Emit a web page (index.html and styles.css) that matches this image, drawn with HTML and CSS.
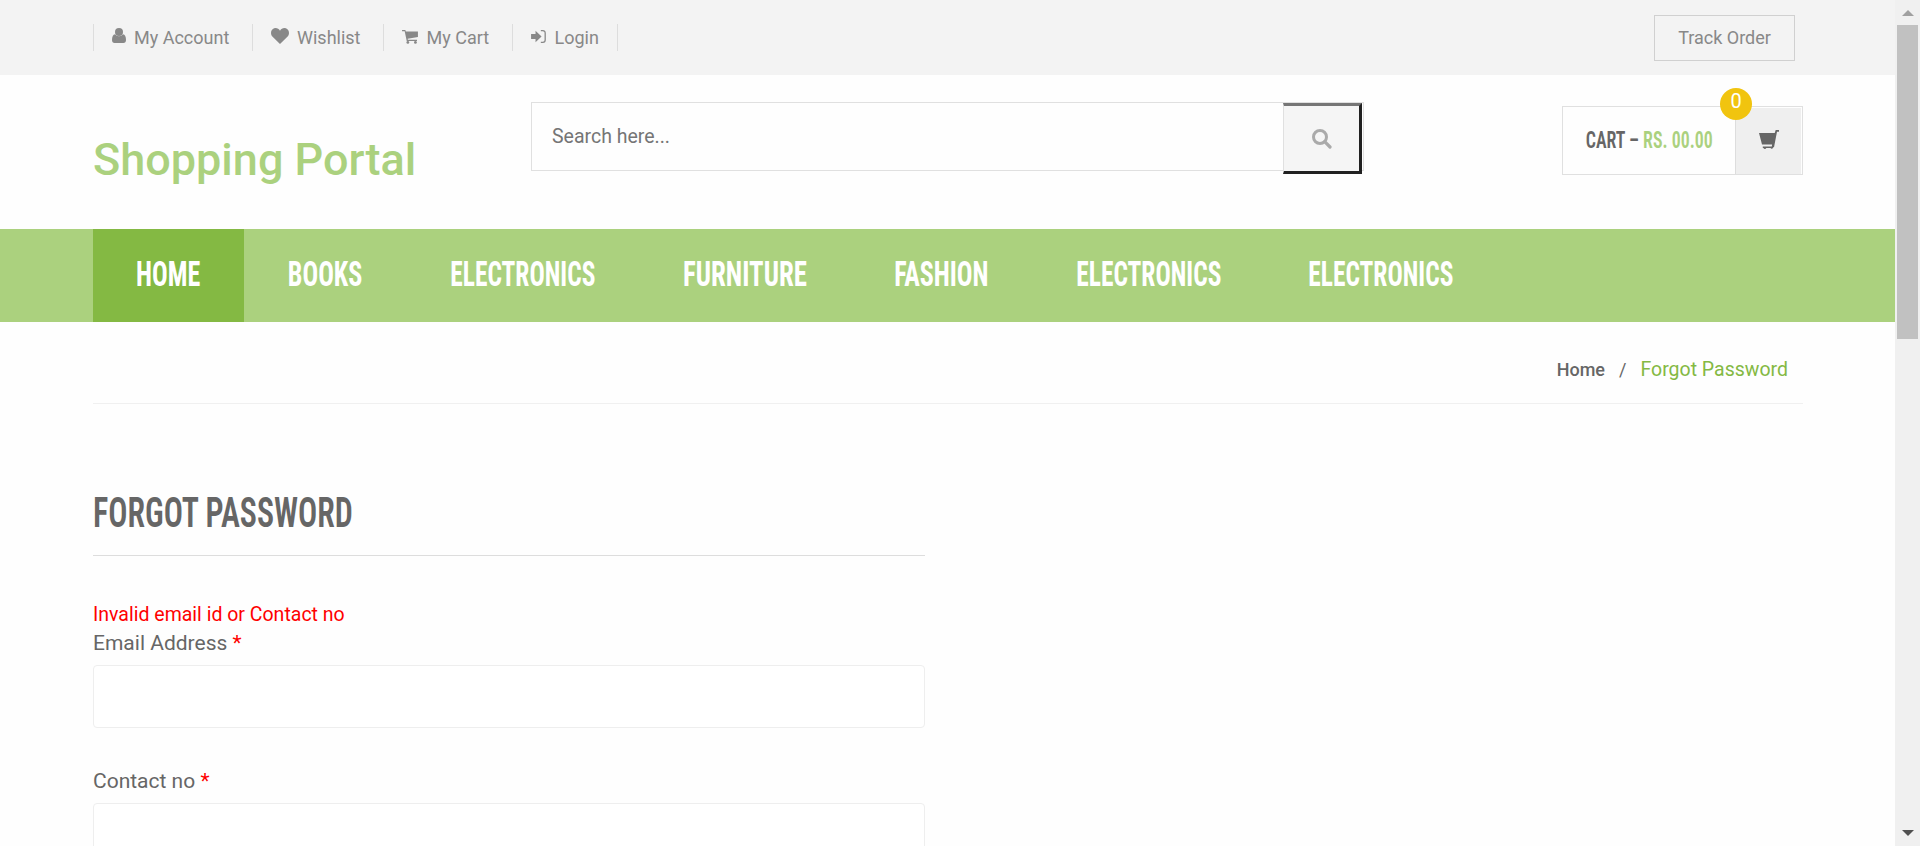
FILE: index.html
```html
<!DOCTYPE html>
<html lang="en">
<head>
<meta charset="utf-8">
<title>Shopping Portal | Forgot Password</title>
<link rel="stylesheet" href="styles.css">
</head>
<body>
<div class="page">
  <div class="topbar">
    <ul class="account">
      <li class="acc-user"><svg width="14" height="15" viewBox="0 0 14 15"><circle cx="7" cy="4" r="4"/><path d="M3 6.300C1 6.500 0 9 0 12c0 2 1 3 2.500 3h9c1.500 0 2.500-1 2.500-3 0-3-1-5.500-3-5.700a5 5 0 0 1-8 0z"/></svg>My Account</li>
      <li class="acc-wish"><svg width="18" height="16" viewBox="0 0 18 16"><path d="M9 16 1.600 8.800C-.7 6.400-.3 2.800 1.600 1.200 4-.8 7.500 0 9 2.800 10.500 0 14-.8 16.400 1.200 18.300 2.800 18.700 6.400 16.400 8.800z"/></svg>Wishlist</li>
      <li class="acc-cart"><svg width="16" height="14" viewBox="0 0 17 15"><path d="M0 0h3.500l.5 1.500h13v6L6 9.300l.2 1.200H16v1.300H5L2.800 1.300H0z"/><circle cx="6.200" cy="13.300" r="1.500"/><circle cx="14.300" cy="13.300" r="1.500"/></svg>My Cart</li>
      <li class="acc-login"><svg width="15" height="13" viewBox="0 0 16 14"><path d="M0 4.300h4.800V.8L11.300 7l-6.500 6.200V9.700H0z"/><path d="M10.500 .7h2.200A2.500 2.500 0 0 1 15.200 3.200v7.600a2.500 2.500 0 0 1-2.500 2.500h-2.200" fill="none" stroke="#888" stroke-width="1.400"/></svg>Login</li>
    </ul>
    <a class="track">Track Order</a>
  </div>
  <header class="header">
    <div class="logo">Shopping Portal</div>
    <form class="search">
      <input class="search-field" placeholder="Search here...">
      <button class="search-button" type="button" aria-label="Search"><svg width="20" height="20" viewBox="0 0 20 20"><circle cx="8" cy="8" r="6.500" fill="none" stroke="#aaa" stroke-width="3"/><path d="M12.700 12.700 18 18" stroke="#aaa" stroke-width="3.200" stroke-linecap="round"/></svg></button>
    </form>
    <div class="cart">
      <div class="cart-total"><span class="condensed">CART – <b>RS. 00.00</b></span></div>
      <div class="cart-icon"><svg width="20" height="20" viewBox="0 0 20 20"><path d="M0 3h15.700L16.700 0H20v1.700h-2L15 17.300h-.8a1.500 1.500 0 0 1-2.700.8H7.300a1.500 1.500 0 0 1-2.800 0H3.800v-1.500h9l.3-2H3z"/></svg></div>
      <span class="badge">0</span>
    </div>
  </header>
  <nav class="nav">
    <a class="nav-item active w-home"><span>HOME</span></a>
    <a class="nav-item w-books"><span>BOOKS</span></a>
    <a class="nav-item w-elec"><span>ELECTRONICS</span></a>
    <a class="nav-item w-furn"><span>FURNITURE</span></a>
    <a class="nav-item w-fash"><span>FASHION</span></a>
    <a class="nav-item w-elec"><span>ELECTRONICS</span></a>
    <a class="nav-item w-elec"><span>ELECTRONICS</span></a>
  </nav>
  <div class="breadcrumb"><span class="crumb-home">Home</span><span class="crumb-sep">/</span><span class="crumb-here">Forgot Password</span></div>
  <main class="content">
    <h1 class="title"><span>FORGOT PASSWORD</span></h1>
    <p class="error">Invalid email id or Contact no</p>
    <label class="label" for="email">Email Address <i>*</i></label>
    <input class="field" id="email">
    <label class="label" for="contact">Contact no <i>*</i></label>
    <input class="field" id="contact">
  </main>
</div>
<div class="scrollbar">
  <svg width="12" height="6" viewBox="0 0 12 6"><path d="M0 6 6 0l6 6z" fill="#a0a0a0"/></svg>
  <div class="thumb"></div>
  <svg class="down" width="12" height="6" viewBox="0 0 12 6"><path d="M0 0h12L6 6z" fill="#505050"/></svg>
</div>
</body>
</html>
```
FILE: styles.css
```css
* { box-sizing: border-box; }
body { margin: 0; display: flex; height: 846px; overflow: hidden; background: #fefefe; color: #666; font-family: Roboto, sans-serif; font-size: 19.5px; }
.page { width: 1895px; height: 846px; overflow: hidden; }
.topbar { height: 75px; padding: 0 100px 0 93px; background: #f3f3f3; display: flex; align-items: center; justify-content: space-between; font-size: 18px; color: #888; }
.account { display: flex; margin: 0; padding: 0; list-style: none; border-left: 1px solid #ddd; }
.account li { height: 27px; line-height: 27px; display: flex; border-right: 1px solid #ddd; padding-left: 18px; }
.account svg { fill: #888; margin-top: 4px; margin-right: 8px; }
.acc-user { width: 159px; }
.acc-wish { width: 131px; }
.acc-cart { width: 129px; }
.acc-login { width: 105px; }
.account .acc-cart svg, .account .acc-login svg { margin-top: 5.5px; margin-right: 8.5px; }
.track { width: 141px; height: 46px; border: 1px solid #d0d0d0; text-align: center; line-height: 44px; }
.header { height: 154px; padding: 27px 92px 0 93px; display: flex; align-items: flex-start; }
.logo { width: 438px; padding-top: 31px; font-size: 45px; font-weight: 500; line-height: 53px; color: #abd17e; }
.search { width: 833px; height: 69px; border: 1px solid #e0e0e0; display: flex; align-items: flex-start; }
.search-field { width: 751px; height: 67px; padding: 0 20px; border: 0; background: transparent; font: 19.5px Roboto, sans-serif; }
.search-field::placeholder { color: #757575; }
.search-button { width: 79px; height: 71px; padding: 0; border: solid; border-width: 3px 3px 3px 1px; border-color: #767676 #212121 #212121 #e0e0e0; background: #f5f5f5; display: flex; align-items: center; justify-content: center; }
.cart { position: relative; width: 241px; height: 69px; margin: 4px 0 0 198px; border: 1px solid #e0e0e0; display: flex; }
.cart-total { width: 172px; display: flex; align-items: center; justify-content: center; font-size: 24px; font-weight: 600; white-space: nowrap; }
.cart-total b { font-weight: 600; color: #abd17e; }
.condensed { font-stretch: 75%; transform: scaleX(.745); padding-bottom: 1px; }
.cart-icon { width: 66px; height: 66px; margin-top: 1px; padding-bottom: 3px; border-left: 1px solid #ddd; background: #efefef; display: flex; align-items: center; justify-content: center; fill: #666; }
.badge { position: absolute; left: 157px; top: -19px; width: 32px; height: 32px; border-radius: 50%; background: #f1c40f; color: #fff; font-size: 20px; text-align: center; line-height: 27px; }
.nav { height: 93px; padding-left: 93px; background: #abd17e; display: flex; }
.nav-item { height: 93px; display: flex; align-items: center; justify-content: center; color: #fff; font-size: 35px; font-weight: 700; font-stretch: 75%; }
.nav-item span { transform: scaleX(.744); padding-bottom: 2px; }
.active { background: #84b943; }
.w-home { width: 151px; }
.w-books { width: 163px; }
.w-elec { width: 232px; }
.w-elec span { transform: scaleX(.726); }
.w-furn { width: 211px; }
.w-furn span { transform: scaleX(.765); }
.w-fash { width: 183px; }
.breadcrumb { height: 82px; margin: 0 92px 0 93px; padding: 36px 15px 0 0; border-bottom: 1px solid #f0f0f0; display: flex; justify-content: flex-end; align-items: baseline; line-height: 24px; }
.crumb-home { font-size: 18px; font-weight: 500; }
.crumb-sep { font-size: 18px; margin: 0 14px; }
.crumb-here { color: #84b943; }
.content { width: 832px; margin-left: 93px; padding-top: 81px; }
.title { height: 71px; margin: 0 0 45px; border-bottom: 1px solid #ddd; font-size: 42px; line-height: 55px; font-weight: 600; font-stretch: 75%; white-space: nowrap; }
.title span { display: inline-block; transform: scaleX(.76); transform-origin: left; }
.error { margin: 0 0 1px; color: #f00; line-height: 27px; }
.label { display: block; font-size: 21px; line-height: 29px; }
.label i { font-style: normal; color: #f00; }
.field { display: block; width: 832px; height: 63px; margin: 7px 0 39px; border: 1px solid #eee; border-radius: 4px; background: #fff; }
.scrollbar { width: 25px; height: 846px; padding: 10px 0; background: #f0f0f0; display: flex; flex-direction: column; align-items: center; }
.thumb { width: 21px; height: 314px; margin-top: 9px; background: #c1c1c1; }
.down { margin-top: auto; }
```
